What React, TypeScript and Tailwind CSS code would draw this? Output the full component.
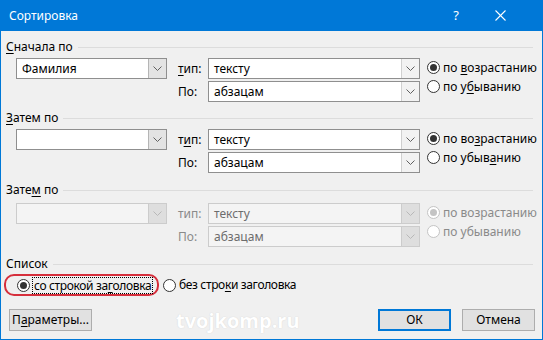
import React from "react";

function Chevron({ disabled }: { disabled?: boolean }) {
  return (
    <svg width="9" height="5" viewBox="0 0 9 5">
      <polyline
        points="0.5,0.5 4.5,4.5 8.5,0.5"
        fill="none"
        stroke={disabled ? "#b8b8b8" : "#606060"}
        strokeWidth="1"
      />
    </svg>
  );
}

function Combo({
  value,
  width,
  disabled,
  grayBtn,
}: {
  value?: string;
  width: number;
  disabled?: boolean;
  grayBtn?: boolean;
}) {
  return (
    <div
      className={
        "flex h-[21px] border " +
        (disabled ? "border-[#cccccc] bg-[#f4f4f4]" : "border-[#8f8f8f] bg-white")
      }
      style={{ width }}
    >
      <div
        className={
          "flex flex-1 items-center whitespace-nowrap pl-[5px] text-[12px] leading-none " +
          (disabled ? "text-[#6d6d6d]" : "text-black")
        }
      >
        {value}
      </div>
      <div
        className={
          "flex w-[18px] items-center justify-center border-l " +
          (disabled
            ? "border-[#cccccc] bg-[#dedede]"
            : grayBtn
            ? "border-[#b5b5b5] bg-[#e3e3e3]"
            : "border-[#d0d0d0] bg-[#f2f2f2]")
        }
      >
        <Chevron disabled={disabled} />
      </div>
    </div>
  );
}

function Radio({ checked, disabled }: { checked?: boolean; disabled?: boolean }) {
  return (
    <div
      className={
        "flex h-[13px] w-[13px] shrink-0 items-center justify-center rounded-full border bg-white " +
        (disabled ? "border-[#c4c4c4]" : "border-[#333333]")
      }
    >
      {checked && (
        <div
          className={
            "h-[7px] w-[7px] rounded-full " + (disabled ? "bg-[#c4c4c4]" : "bg-[#333333]")
          }
        />
      )}
    </div>
  );
}

function Header({ children }: { children: React.ReactNode }) {
  return (
    <div className="flex h-[16px] items-center pl-[5px] pr-[9px]">
      <span className="whitespace-nowrap text-[12px] leading-none text-black">{children}</span>
      <div className="ml-[5px] h-px flex-1 bg-[#dcdcdc]" />
    </div>
  );
}

function U({ children }: { children: React.ReactNode }) {
  return <span className="underline underline-offset-2">{children}</span>;
}

function SortSection({
  title,
  field,
  disabled,
  tip,
  asc,
  desc,
  rowsTop,
}: {
  title: React.ReactNode;
  field?: string;
  disabled?: boolean;
  tip: React.ReactNode;
  asc: React.ReactNode;
  desc: React.ReactNode;
  rowsTop?: boolean;
}) {
  const lbl = disabled ? "text-[#8a8a8a]" : "text-black";
  return (
    <div>
      <Header>{title}</Header>
      <div className={(rowsTop ? "mt-[5px]" : "mt-[3px]") + " flex pl-[15px]"}>
        <div className="w-[151px]">
          <Combo value={field} width={151} disabled={disabled} grayBtn />
        </div>
        <div className={"ml-[11px] flex w-[30px] flex-col gap-[2px] text-[12px] " + lbl}>
          <div className="flex h-[21px] items-center whitespace-nowrap">{tip}</div>
          <div className="flex h-[21px] items-center whitespace-nowrap">По:</div>
        </div>
        <div className="flex flex-col gap-[2px]">
          <Combo value="тексту" width={212} disabled={disabled} />
          <Combo value="абзацам" width={212} disabled={disabled} />
        </div>
        <div className="ml-[7px] flex flex-col">
          <div className={"flex h-[19px] items-center gap-[3px] whitespace-nowrap text-[12px] " + lbl}>
            <Radio checked disabled={disabled} />
            <span>{asc}</span>
          </div>
          <div className={"flex h-[19px] items-center gap-[3px] whitespace-nowrap text-[12px] " + lbl}>
            <Radio disabled={disabled} />
            <span>{desc}</span>
          </div>
        </div>
      </div>
    </div>
  );
}

export default function App() {
  return (
    <div className="relative flex h-[340px] w-[543px] flex-col bg-[#0078d7] font-['Noto_Sans',sans-serif] text-[12px]">
      {/* Title bar */}
      <div className="flex h-[31px] shrink-0 items-center text-white">
        <span className="pl-[9px] text-[12px]">Сортировка</span>
        <div className="flex-1" />
        <span className="mr-[36px] text-[13px]">?</span>
        <svg width="11" height="11" viewBox="0 0 11 11" className="mr-[37px]">
          <line x1="0.5" y1="0.5" x2="10.5" y2="10.5" stroke="white" strokeWidth="1.1" />
          <line x1="10.5" y1="0.5" x2="0.5" y2="10.5" stroke="white" strokeWidth="1.1" />
        </svg>
      </div>
      {/* Body */}
      <div className="mx-[1px] mb-[1px] flex flex-1 flex-col bg-[#f0f0f0] pt-[8px]">
        <SortSection
          title={
            <>
              <U>С</U>начала по
            </>
          }
          field="Фамилия"
          tip={
            <>
              <U>т</U>ип:
            </>
          }
          asc={
            <>
              по <U>в</U>озрастанию
            </>
          }
          desc={
            <>
              по у<U>б</U>ыванию
            </>
          }
        />
        <div className="h-[8px]" />
        <SortSection
          title={
            <>
              <U>З</U>атем по
            </>
          }
          field=""
          tip={
            <>
              т<U>и</U>п:
            </>
          }
          asc={
            <>
              по во<U>з</U>растанию
            </>
          }
          desc={
            <>
              по убыв<U>а</U>нию
            </>
          }
        />
        <div className="h-[9px]" />
        <SortSection
          title={
            <>
              Зате<U>м</U> по
            </>
          }
          field=""
          disabled
          rowsTop
          tip="тип:"
          asc="по возрастанию"
          desc="по убыванию"
        />
        <div className="h-[9px]" />
        <Header>Список</Header>
        <div className="mt-[3px] flex h-[20px] items-center tracking-[-0.35px]">
          <div className="ml-[3px] flex h-[22px] w-[155px] shrink-0 items-center rounded-[10px] border-2 border-[#d62f3c] pl-[11px]">
            <Radio checked />
            <span className="ml-[2px] whitespace-nowrap border border-dotted border-black px-[1px] leading-[15px]">
              со строкой за<U>г</U>оловка
            </span>
          </div>
          <div className="ml-[4px] flex items-center gap-[3px] whitespace-nowrap">
            <Radio />
            <span>
              без стро<U>к</U>и заголовка
            </span>
          </div>
        </div>
        <div className="mt-[14px] flex h-[22px] items-stretch pl-[8px] pr-[7px]">
          <button className="flex w-[83px] items-center justify-center whitespace-nowrap border border-[#adadad] bg-[#e1e1e1] text-[12px] text-black">
            П<U>а</U>раметры...
          </button>
          <div className="flex-1" />
          <button className="flex w-[73px] items-center justify-center border-2 border-[#0078d7] bg-[#e1e1e1] text-[12px] text-black">
            ОК
          </button>
          <button className="ml-[11px] flex w-[73px] items-center justify-center border border-[#adadad] bg-[#e1e1e1] text-[12px] text-black">
            Отмена
          </button>
        </div>
      </div>
      {/* watermark */}
      <div className="pointer-events-none absolute left-[176px] top-[306px] font-['Open_Sans',sans-serif] text-[20px] font-bold text-white [text-shadow:0_0_1px_rgba(180,180,180,0.6)]">
        tvojkomp.ru
      </div>
    </div>
  );
}
